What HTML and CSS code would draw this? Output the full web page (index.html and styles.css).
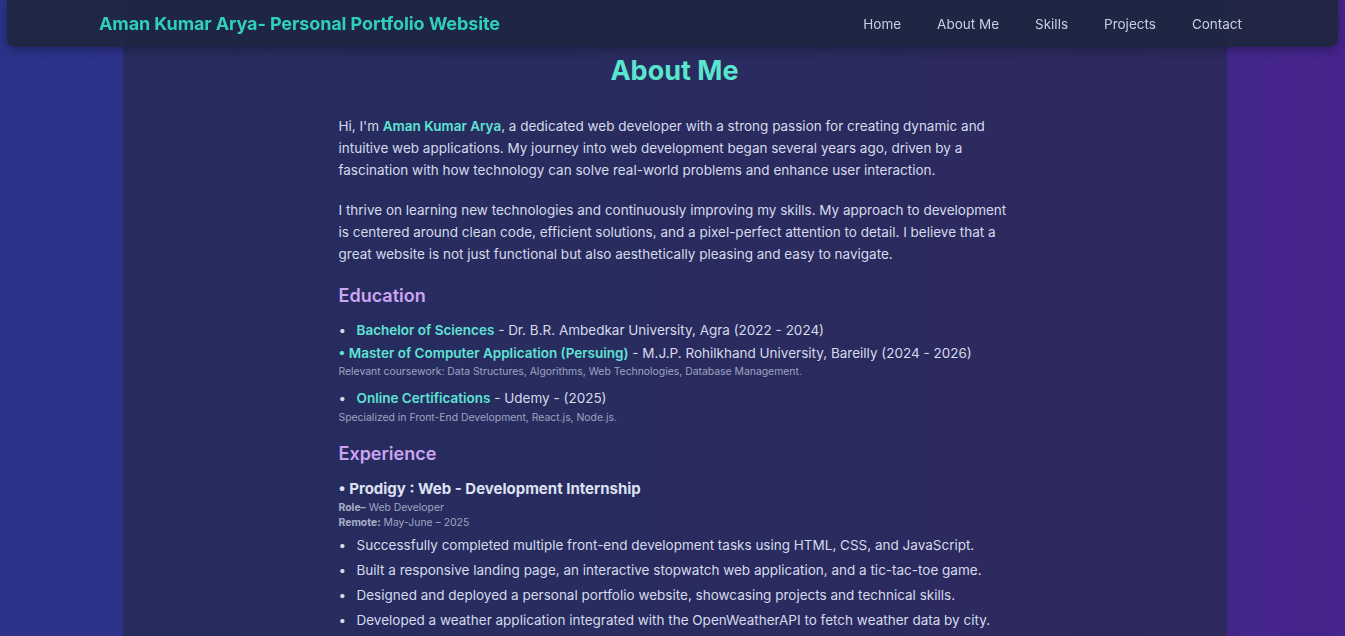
FILE: index.html
```html
<!DOCTYPE html>
<html lang="en">
<head>
<meta charset="utf-8">
<title>Aman Kumar Arya - Portfolio</title>
<link rel="stylesheet" href="styles.css">
</head>
<body>
<header class="topbar">
  <div class="brand">Aman Kumar Arya- Personal Portfolio Website</div>
  <nav class="nav">
    <a href="#">Home</a>
    <a href="#">About Me</a>
    <a href="#">Skills</a>
    <a href="#">Projects</a>
    <a href="#">Contact</a>
  </nav>
</header>
<main class="card">
  <section class="about">
    <h2 class="title">About Me</h2>
    <p class="para">Hi, I'm <strong class="hl">Aman Kumar Arya</strong>, a dedicated web developer with a strong passion for creating dynamic and intuitive web applications. My journey into web development began several years ago, driven by a fascination with how technology can solve real-world problems and enhance user interaction.</p>
    <p class="para">I thrive on learning new technologies and continuously improving my skills. My approach to development is centered around clean code, efficient solutions, and a pixel-perfect attention to detail. I believe that a great website is not just functional but also aesthetically pleasing and easy to navigate.</p>

    <h3 class="sub">Education</h3>
    <ul class="list edu">
      <li class="item"><strong class="hl">Bachelor of Sciences</strong> - Dr. B.R. Ambedkar University, Agra (2022 - 2024)</li>
    </ul>
    <p class="line"><strong class="hl">• Master of Computer Application (Persuing)</strong> - M.J.P. Rohilkhand University, Bareilly (2024 - 2026)</p>
    <p class="note">Relevant coursework: Data Structures, Algorithms, Web Technologies, Database Management.</p>
    <ul class="list edu cert">
      <li class="item"><strong class="hl">Online Certifications</strong> - Udemy - (2025)</li>
    </ul>
    <p class="note">Specialized in Front-End Development, React.js, Node.js.</p>

    <h3 class="sub exp">Experience</h3>
    <p class="job">• Prodigy : Web - Development Internship</p>
    <p class="meta"><b>Role–</b> Web Developer</p>
    <p class="meta"><b>Remote:</b> May-June – 2025</p>
    <ul class="list tasks">
      <li class="item">Successfully completed multiple front-end development tasks using HTML, CSS, and JavaScript.</li>
      <li class="item">Built a responsive landing page, an interactive stopwatch web application, and a tic-tac-toe game.</li>
      <li class="item">Designed and deployed a personal portfolio website, showcasing projects and technical skills.</li>
      <li class="item">Developed a weather application integrated with the OpenWeatherAPI to fetch weather data by city.</li>
      <li class="item">Collaborated with mentors to review code, fix bugs, and improve overall project quality.</li>
    </ul>
  </section>
</main>
</body>
</html>
```

FILE: styles.css
```css
* { box-sizing: border-box; }

html, body {
  margin: 0;
  padding: 0;
}

body {
  min-height: 100vh;
  font-family: Inter, "Noto Sans", "Liberation Sans", sans-serif;
  color: #d6daec;
  background: linear-gradient(90deg, #2a3389 0%, #33308a 40%, #3e2a8a 70%, #46248b 100%);
  background-attachment: fixed;
  overflow-x: hidden;
}

.topbar {
  position: fixed;
  top: 0;
  left: 7px;
  right: 7px;
  height: 47px;
  display: flex;
  align-items: center;
  justify-content: space-between;
  padding: 0 96px 0 92px;
  background: rgba(31, 39, 66, 0.96);
  border-radius: 0 0 8px 8px;
  box-shadow: 0 3px 10px rgba(10, 12, 35, 0.35);
  z-index: 10;
}

.brand {
  font-size: 18px;
  font-weight: 700;
  color: #2fcfbf;
  letter-spacing: -0.1px;
}

.nav {
  display: flex;
  gap: 36px;
}

.nav a {
  color: #c9cee2;
  text-decoration: none;
  font-size: 13.5px;
}

.card {
  width: 1104px;
  margin: 0 0 0 calc(50% - 550px);
  min-height: 100vh;
  background: rgba(35, 43, 72, 0.66);
  padding: 54px 0 40px;
}

.about {
  width: 672px;
  margin: 0 auto;
}

.title {
  margin: 0 0 27px;
  text-align: center;
  font-size: 27px;
  line-height: 34px;
  font-weight: 700;
  color: #5ae5cf;
}

.para {
  margin: 0 0 18px;
  font-size: 13.5px;
  line-height: 22px;
}

.hl {
  color: #5fe3d6;
  font-weight: 600;
}

.sub {
  margin: 19px 0 11px;
  font-size: 18px;
  line-height: 24px;
  font-weight: 600;
  color: #cda4f3;
}

.list {
  list-style: none;
  margin: 0;
  padding: 0;
}

.item {
  font-size: 13.5px;
  line-height: 22px;
}

.item::before {
  content: "•";
  display: inline-block;
  width: 18px;
  padding-left: 0;
}

.edu .item {
  margin-bottom: 1px;
}

.line {
  margin: 0;
  font-size: 13.5px;
  line-height: 22px;
}

.note {
  margin: 0;
  font-size: 10.4px;
  line-height: 16px;
  color: #9ea4c2;
}

.cert {
  margin-top: 7px;
}

.sub.exp {
  margin-top: 16px;
  margin-bottom: 12px;
}

.job {
  margin: 0;
  font-size: 15px;
  line-height: 22px;
  font-weight: 700;
  color: #dde1f2;
}

.meta {
  margin: 0;
  font-size: 10.4px;
  line-height: 15px;
  color: #9ea4c2;
}

.meta b {
  font-weight: 700;
  color: #a9aec6;
}

.tasks {
  margin-top: 4px;
}

.tasks .item {
  margin-bottom: 3px;
}
```
